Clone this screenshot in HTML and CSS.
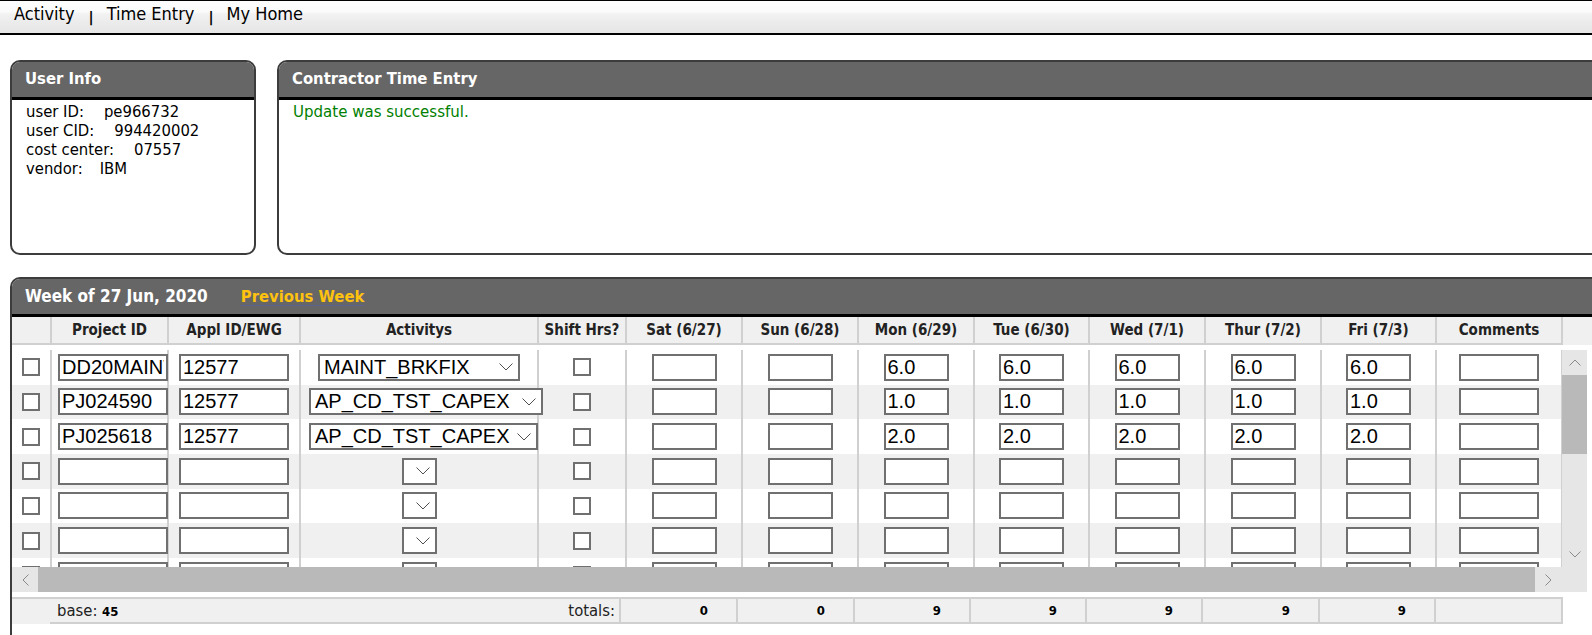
FILE: index.html
```html
<!DOCTYPE html>
<html lang="en">
<head>
<meta charset="utf-8">
<title>Contractor Time Entry</title>
<link rel="stylesheet" href="styles.css">
</head>
<body>
<nav class="topnav">
  <a class="nav-link" href="#">Activity</a><span class="nav-sep">|</span><a class="nav-link" href="#">Time Entry</a><span class="nav-sep">|</span><a class="nav-link" href="#">My Home</a>
</nav>

<div class="top-panels">
  <section class="panel user-panel">
    <h2 class="panel-head">User Info</h2>
    <div class="user-body">
      <div class="info-line">user ID:<span class="info-val">pe966732</span></div>
      <div class="info-line">user CID:<span class="info-val">994420002</span></div>
      <div class="info-line">cost center:<span class="info-val">07557</span></div>
      <div class="info-line">vendor:<span class="info-val info-val-short">IBM</span></div>
    </div>
  </section>
  <section class="panel entry-panel">
    <h2 class="panel-head">Contractor Time Entry</h2>
    <div class="entry-body">
      <p class="success-msg">Update was successful.</p>
    </div>
  </section>
</div>

<section class="panel week-panel">
  <h2 class="panel-head week-head"><span class="week-title">Week of 27 Jun, 2020</span><a class="prev-week" href="#">Previous Week</a></h2>

  <div class="grid-head">
    <div class="hcell"></div>
    <div class="hcell">Project ID</div>
    <div class="hcell">Appl ID/EWG</div>
    <div class="hcell">Activitys</div>
    <div class="hcell">Shift Hrs?</div>
    <div class="hcell">Sat (6/27)</div>
    <div class="hcell">Sun (6/28)</div>
    <div class="hcell">Mon (6/29)</div>
    <div class="hcell">Tue (6/30)</div>
    <div class="hcell">Wed (7/1)</div>
    <div class="hcell">Thur (7/2)</div>
    <div class="hcell">Fri (7/3)</div>
    <div class="hcell">Comments</div>
    <div class="hcell hcell-fill"></div>
  </div>

  <div class="grid-body">
    <div class="rows">
      <div class="row">
        <div class="cell"><input class="chk" type="checkbox"></div>
        <div class="cell cell-proj"><input class="field field-id" type="text" value="DD20MAINT"></div>
        <div class="cell"><input class="field field-id" type="text" value="12577"></div>
        <div class="cell cell-act"><div class="select sel-brkfix"><span class="select-text">MAINT_BRKFIX</span><svg class="chev" width="14" height="8" viewBox="0 0 14 8"><path d="M0.5 0.5 L7 7 L13.5 0.5" fill="none" stroke="#505050" stroke-width="1"/></svg></div></div>
        <div class="cell"><input class="chk" type="checkbox"></div>
        <div class="cell"><input class="field field-day" type="text" value=""></div>
        <div class="cell"><input class="field field-day" type="text" value=""></div>
        <div class="cell"><input class="field field-day" type="text" value="6.0"></div>
        <div class="cell"><input class="field field-day" type="text" value="6.0"></div>
        <div class="cell"><input class="field field-day" type="text" value="6.0"></div>
        <div class="cell"><input class="field field-day" type="text" value="6.0"></div>
        <div class="cell"><input class="field field-day" type="text" value="6.0"></div>
        <div class="cell"><input class="field field-note" type="text" value=""></div>
      </div>
      <div class="row">
        <div class="cell"><input class="chk" type="checkbox"></div>
        <div class="cell cell-proj"><input class="field field-id" type="text" value="PJ024590"></div>
        <div class="cell"><input class="field field-id" type="text" value="12577"></div>
        <div class="cell cell-act"><div class="select sel-capex"><span class="select-text">AP_CD_TST_CAPEX</span><svg class="chev" width="14" height="8" viewBox="0 0 14 8"><path d="M0.5 0.5 L7 7 L13.5 0.5" fill="none" stroke="#505050" stroke-width="1"/></svg></div></div>
        <div class="cell"><input class="chk" type="checkbox"></div>
        <div class="cell"><input class="field field-day" type="text" value=""></div>
        <div class="cell"><input class="field field-day" type="text" value=""></div>
        <div class="cell"><input class="field field-day" type="text" value="1.0"></div>
        <div class="cell"><input class="field field-day" type="text" value="1.0"></div>
        <div class="cell"><input class="field field-day" type="text" value="1.0"></div>
        <div class="cell"><input class="field field-day" type="text" value="1.0"></div>
        <div class="cell"><input class="field field-day" type="text" value="1.0"></div>
        <div class="cell"><input class="field field-note" type="text" value=""></div>
      </div>
      <div class="row">
        <div class="cell"><input class="chk" type="checkbox"></div>
        <div class="cell cell-proj"><input class="field field-id" type="text" value="PJ025618"></div>
        <div class="cell"><input class="field field-id" type="text" value="12577"></div>
        <div class="cell cell-act"><div class="select sel-capex-alt"><span class="select-text">AP_CD_TST_CAPEX</span><svg class="chev" width="14" height="8" viewBox="0 0 14 8"><path d="M0.5 0.5 L7 7 L13.5 0.5" fill="none" stroke="#505050" stroke-width="1"/></svg></div></div>
        <div class="cell"><input class="chk" type="checkbox"></div>
        <div class="cell"><input class="field field-day" type="text" value=""></div>
        <div class="cell"><input class="field field-day" type="text" value=""></div>
        <div class="cell"><input class="field field-day" type="text" value="2.0"></div>
        <div class="cell"><input class="field field-day" type="text" value="2.0"></div>
        <div class="cell"><input class="field field-day" type="text" value="2.0"></div>
        <div class="cell"><input class="field field-day" type="text" value="2.0"></div>
        <div class="cell"><input class="field field-day" type="text" value="2.0"></div>
        <div class="cell"><input class="field field-note" type="text" value=""></div>
      </div>
      <div class="row">
        <div class="cell"><input class="chk" type="checkbox"></div>
        <div class="cell cell-proj"><input class="field field-id" type="text" value=""></div>
        <div class="cell"><input class="field field-id" type="text" value=""></div>
        <div class="cell cell-act"><div class="select sel-empty"><svg class="chev" width="14" height="8" viewBox="0 0 14 8"><path d="M0.5 0.5 L7 7 L13.5 0.5" fill="none" stroke="#505050" stroke-width="1"/></svg></div></div>
        <div class="cell"><input class="chk" type="checkbox"></div>
        <div class="cell"><input class="field field-day" type="text" value=""></div>
        <div class="cell"><input class="field field-day" type="text" value=""></div>
        <div class="cell"><input class="field field-day" type="text" value=""></div>
        <div class="cell"><input class="field field-day" type="text" value=""></div>
        <div class="cell"><input class="field field-day" type="text" value=""></div>
        <div class="cell"><input class="field field-day" type="text" value=""></div>
        <div class="cell"><input class="field field-day" type="text" value=""></div>
        <div class="cell"><input class="field field-note" type="text" value=""></div>
      </div>
      <div class="row">
        <div class="cell"><input class="chk" type="checkbox"></div>
        <div class="cell cell-proj"><input class="field field-id" type="text" value=""></div>
        <div class="cell"><input class="field field-id" type="text" value=""></div>
        <div class="cell cell-act"><div class="select sel-empty"><svg class="chev" width="14" height="8" viewBox="0 0 14 8"><path d="M0.5 0.5 L7 7 L13.5 0.5" fill="none" stroke="#505050" stroke-width="1"/></svg></div></div>
        <div class="cell"><input class="chk" type="checkbox"></div>
        <div class="cell"><input class="field field-day" type="text" value=""></div>
        <div class="cell"><input class="field field-day" type="text" value=""></div>
        <div class="cell"><input class="field field-day" type="text" value=""></div>
        <div class="cell"><input class="field field-day" type="text" value=""></div>
        <div class="cell"><input class="field field-day" type="text" value=""></div>
        <div class="cell"><input class="field field-day" type="text" value=""></div>
        <div class="cell"><input class="field field-day" type="text" value=""></div>
        <div class="cell"><input class="field field-note" type="text" value=""></div>
      </div>
      <div class="row">
        <div class="cell"><input class="chk" type="checkbox"></div>
        <div class="cell cell-proj"><input class="field field-id" type="text" value=""></div>
        <div class="cell"><input class="field field-id" type="text" value=""></div>
        <div class="cell cell-act"><div class="select sel-empty"><svg class="chev" width="14" height="8" viewBox="0 0 14 8"><path d="M0.5 0.5 L7 7 L13.5 0.5" fill="none" stroke="#505050" stroke-width="1"/></svg></div></div>
        <div class="cell"><input class="chk" type="checkbox"></div>
        <div class="cell"><input class="field field-day" type="text" value=""></div>
        <div class="cell"><input class="field field-day" type="text" value=""></div>
        <div class="cell"><input class="field field-day" type="text" value=""></div>
        <div class="cell"><input class="field field-day" type="text" value=""></div>
        <div class="cell"><input class="field field-day" type="text" value=""></div>
        <div class="cell"><input class="field field-day" type="text" value=""></div>
        <div class="cell"><input class="field field-day" type="text" value=""></div>
        <div class="cell"><input class="field field-note" type="text" value=""></div>
      </div>
      <div class="row">
        <div class="cell"><input class="chk" type="checkbox"></div>
        <div class="cell cell-proj"><input class="field field-id" type="text" value=""></div>
        <div class="cell"><input class="field field-id" type="text" value=""></div>
        <div class="cell cell-act"><div class="select sel-empty"><svg class="chev" width="14" height="8" viewBox="0 0 14 8"><path d="M0.5 0.5 L7 7 L13.5 0.5" fill="none" stroke="#505050" stroke-width="1"/></svg></div></div>
        <div class="cell"><input class="chk" type="checkbox"></div>
        <div class="cell"><input class="field field-day" type="text" value=""></div>
        <div class="cell"><input class="field field-day" type="text" value=""></div>
        <div class="cell"><input class="field field-day" type="text" value=""></div>
        <div class="cell"><input class="field field-day" type="text" value=""></div>
        <div class="cell"><input class="field field-day" type="text" value=""></div>
        <div class="cell"><input class="field field-day" type="text" value=""></div>
        <div class="cell"><input class="field field-day" type="text" value=""></div>
        <div class="cell"><input class="field field-note" type="text" value=""></div>
      </div>
    </div>

    <div class="vscroll">
      <div class="sb-btn sb-btn-v"><svg width="12" height="7" viewBox="0 0 12 7"><path d="M0.5 6.5 L6 1 L11.5 6.5" fill="none" stroke="#8a8a8a" stroke-width="1"/></svg></div>
      <div class="sb-thumb sb-thumb-v"></div>
      <div class="sb-track"></div>
      <div class="sb-btn sb-btn-v"><svg width="12" height="7" viewBox="0 0 12 7"><path d="M0.5 0.5 L6 6 L11.5 0.5" fill="none" stroke="#8a8a8a" stroke-width="1"/></svg></div>
    </div>

    <div class="hscroll">
      <div class="sb-btn sb-btn-left"><svg width="7" height="12" viewBox="0 0 7 12"><path d="M6.5 0.5 L1 6 L6.5 11.5" fill="none" stroke="#8a8a8a" stroke-width="1"/></svg></div>
      <div class="sb-thumb sb-thumb-h"></div>
      <div class="sb-btn sb-btn-right"><svg width="7" height="12" viewBox="0 0 7 12"><path d="M0.5 0.5 L6 6 L0.5 11.5" fill="none" stroke="#8a8a8a" stroke-width="1"/></svg></div>
    </div>
    <div class="sb-corner"></div>
  </div>

  <div class="totals">
    <div class="tcell tcell-blank"></div>
    <div class="tcell tcell-label"><span class="base">base: <b class="num">45</b></span><span class="totals-label">totals:</span></div>
    <div class="tcell tcell-val"><b class="num">0</b></div>
    <div class="tcell tcell-val"><b class="num">0</b></div>
    <div class="tcell tcell-val"><b class="num">9</b></div>
    <div class="tcell tcell-val"><b class="num">9</b></div>
    <div class="tcell tcell-val"><b class="num">9</b></div>
    <div class="tcell tcell-val"><b class="num">9</b></div>
    <div class="tcell tcell-val"><b class="num">9</b></div>
    <div class="tcell tcell-val"></div>
  </div>
</section>
</body>
</html>
```

FILE: styles.css
```css
* {
  box-sizing: border-box;
}

html,
body {
  margin: 0;
  padding: 0;
  overflow: hidden;
}

body {
  width: 1592px;
  height: 635px;
  background: #fff;
  color: #000;
  font-family: "DejaVu Sans Condensed", "DejaVu Sans", sans-serif;
}

/* ---------- top navigation ---------- */
.topnav {
  height: 35px;
  padding: 2px 0 0 14px;
  border-top: 1px solid #000;
  border-bottom: 2px solid #000;
  background: linear-gradient(#fdfdfd 0%, #fafafa 35%, #f2f2f2 40%, #ececec 65%, #e6e6e6 100%);
  font-size: 18px;
  line-height: 21px;
  white-space: nowrap;
}

.nav-link {
  color: #000;
  text-decoration: none;
}

.nav-sep {
  display: inline-block;
  margin: 0 13px 0 14px;
  font-family: "DejaVu Sans", sans-serif;
  font-size: 14px;
  font-weight: bold;
  vertical-align: -2px;
}

/* ---------- panels ---------- */
.top-panels {
  display: flex;
  gap: 21px;
  height: 195px;
  margin: 25px 0 0 10px;
}

.panel {
  flex: none;
  border: 2px solid #3c3c3c;
  border-radius: 10px;
  background: #fff;
  overflow: hidden;
}

.user-panel {
  width: 246px;
}

.entry-panel {
  width: 1340px;
}

.panel-head {
  height: 38px;
  margin: 0;
  padding: 0 0 0 13px;
  border-bottom: 3px solid #000;
  background: #666;
  color: #fff;
  font-size: 16.5px;
  font-weight: bold;
  line-height: 33px;
  white-space: nowrap;
}

.user-body {
  padding: 2px 0 0 14px;
  font-size: 16.5px;
  line-height: 19px;
  white-space: nowrap;
}

.info-val {
  margin-left: 20px;
}

.info-val-short {
  margin-left: 17px;
}

.entry-body {
  padding: 2px 0 0 14px;
}

.success-msg {
  margin: 0;
  color: #008000;
  font-size: 16.7px;
  line-height: 19px;
}

/* ---------- week grid ---------- */
.week-panel {
  width: 1620px;
  height: 400px;
  margin: 22px 0 0 10px;
  border-radius: 10px 10px 0 0;
}

.week-head {
  display: flex;
  align-items: center;
  gap: 33px;
  padding-left: 13px;
}

.week-title {
  font-size: 17px;
}

.prev-week {
  color: #ffc20e;
  font-size: 16.5px;
  text-decoration: underline;
  text-decoration-color: #5b628e;
  text-underline-offset: 3px;
}

.grid-head,
.row {
  display: grid;
  grid-template-columns: 40px 117px 132px 238px 88px 116px 116px 116px 115px 116px 116px 115px 126px;
}

.grid-head {
  grid-template-columns: 40px 117px 132px 238px 88px 116px 116px 116px 115px 116px 116px 115px 126px 1fr;
  height: 28px;
  background: #f0f0f0;
}

.hcell {
  display: flex;
  align-items: center;
  justify-content: center;
  border-right: 2px solid #d0d0d0;
  border-bottom: 2px solid #d0d0d0;
  color: #222;
  font-size: 15px;
  font-weight: bold;
  white-space: nowrap;
}

.hcell-fill {
  border: none;
}

.grid-body {
  display: grid;
  grid-template-columns: 1550px 25px;
  grid-template-rows: 217px 25px;
  width: 1575px;
  margin-top: 5px;
}

.rows {
  overflow: hidden;
}

.row {
  height: 34.67px;
  background: #fff;
}

.row:nth-child(even) {
  background: #f0f0f0;
}

.cell {
  display: flex;
  align-items: center;
  min-width: 0;
  border-right: 2px solid #d0d0d0;
  white-space: nowrap;
}

.cell > * {
  margin: 0 auto;
}

.cell-proj {
  padding-left: 6px;
}

.cell-proj > * {
  margin: 0;
}

.cell-act {
  padding: 0 8px;
}

.chk {
  appearance: none;
  -webkit-appearance: none;
  width: 18px;
  height: 18px;
  border: 2px solid #707070;
  border-radius: 0;
  background: #fff;
}

.field {
  flex: none;
  height: 27px;
  padding: 0 2px;
  border: 2px solid #707070;
  border-radius: 0;
  background: #fff;
  color: #000;
  font-family: "Liberation Sans", Arial, sans-serif;
  font-size: 20px;
  outline: none;
}

.field-id {
  width: 110px;
}

.field-day {
  width: 65px;
}

.field-note {
  width: 80px;
}

.select {
  display: flex;
  flex: none;
  align-items: center;
  justify-content: space-between;
  height: 27px;
  padding: 0 5px 0 4px;
  border: 2px solid #707070;
  background: #fff;
  font-family: "Liberation Sans", Arial, sans-serif;
  font-size: 20px;
}

.sel-brkfix {
  width: 202px;
}

.sel-capex {
  width: 234px;
}

.sel-capex-alt {
  width: 229px;
}

.sel-empty {
  width: 35px;
  justify-content: flex-end;
}

.chev {
  flex: none;
  display: block;
}

/* fake scrollbars */
.vscroll {
  display: flex;
  flex-direction: column;
  background: #e6e6e6;
}

.sb-btn {
  display: flex;
  flex: none;
  align-items: center;
  justify-content: center;
  background: #e6e6e6;
}

.sb-btn-v {
  height: 25px;
}

.sb-thumb {
  background: #b9b9b9;
}

.sb-thumb-v {
  height: 79px;
  flex: none;
}

.sb-track {
  flex: 1;
}

.hscroll {
  display: flex;
}

.sb-btn-left {
  width: 26px;
}

.sb-btn-right {
  width: 27px;
}

.sb-thumb-h {
  flex: 1;
}

.sb-corner {
  background: #e6e6e6;
}

/* totals */
.totals {
  display: grid;
  grid-template-columns: 38px 571px 117px 117px 116px 116px 116px 117px 116px 127px;
  width: 1551px;
  height: 27px;
  margin-top: 5px;
  border-top: 2px solid #d0d0d0;
  background: #f0f0f0;
  font-size: 16.5px;
  color: #222;
}

.tcell {
  display: flex;
  align-items: center;
  border-right: 2px solid #d0d0d0;
  border-bottom: 2px solid #d0d0d0;
  white-space: nowrap;
}

.tcell-blank {
  border: none;
}

.tcell-label {
  justify-content: space-between;
  padding: 0 4px 0 7px;
}

.tcell-val {
  justify-content: flex-end;
  padding-right: 28px;
}

.num {
  color: #000;
  font-size: 13px;
  font-weight: bold;
}
```
